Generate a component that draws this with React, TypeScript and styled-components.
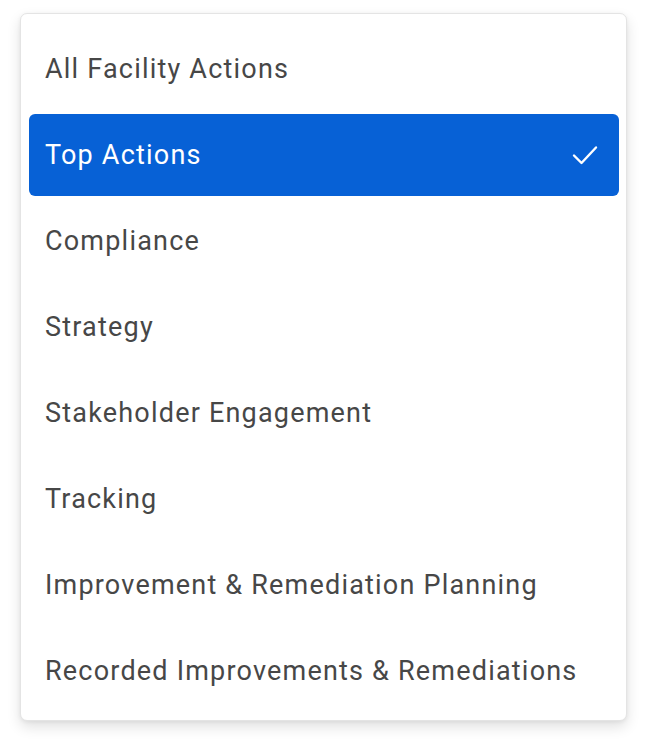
import { FC } from 'react'
import styled, { createGlobalStyle } from 'styled-components'

const GlobalStyle = createGlobalStyle`
    html, body {
        margin: 0;
        padding: 0;
        background: #ffffff;
    }
    body {
        font-family: Roboto, "Liberation Sans", sans-serif;
    }
`

const Page = styled.div`
    width: 648px;
    height: 750px;
    padding: 13px 21px 0 20px;
    box-sizing: border-box;
`

const Menu = styled.ul`
    list-style: none;
    margin: 0;
    padding: 14px 7px 8px 8px;
    background: #fff;
    border: 1px solid #e4e4e4;
    border-radius: 7px;
    box-shadow: 0 6px 14px rgba(0, 0, 0, 0.12), 0 1px 4px rgba(0, 0, 0, 0.06);
    display: flex;
    flex-direction: column;
    gap: 4px;
`

const Item = styled.li<{ $selected?: boolean }>`
    height: 82px;
    display: flex;
    align-items: center;
    justify-content: space-between;
    padding: 0 20px 0 16px;
    border-radius: 6px;
    font-size: 27px;
    letter-spacing: 1.2px;
    color: ${(p) => (p.$selected ? '#ffffff' : '#474747')};
    background: ${(p) => (p.$selected ? '#0761d6' : 'transparent')};
    cursor: pointer;
`

const Check = styled.svg`
    width: 28px;
    height: 28px;
    flex: 0 0 28px;
`

const options = [
    'All Facility Actions',
    'Top Actions',
    'Compliance',
    'Strategy',
    'Stakeholder Engagement',
    'Tracking',
    'Improvement & Remediation Planning',
    'Recorded Improvements & Remediations',
]

const App: FC = () => {
    const selected = 'Top Actions'
    return <Page>
        <GlobalStyle />
        <Menu>
            {options.map((o) => (
                <Item key={o} $selected={o === selected}>
                    <span>{o}</span>
                    {o === selected && (
                        <Check viewBox="0 0 28 28" fill="none">
                            <path d="M3 14.5 L10.5 22 L25 6.5" stroke="#fff" strokeWidth="2.4" strokeLinecap="round" strokeLinejoin="round" />
                        </Check>
                    )}
                </Item>
            ))}
        </Menu>
    </Page>
}

export default App
